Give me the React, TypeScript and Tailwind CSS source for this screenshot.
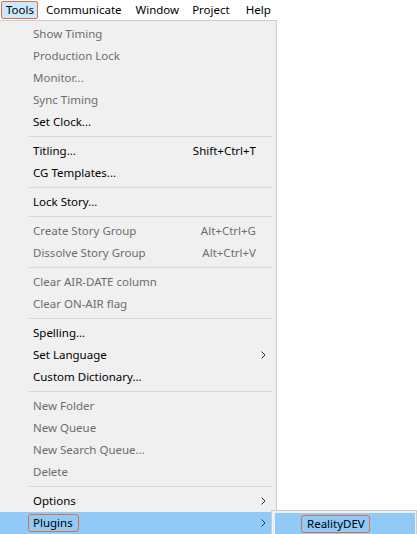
type Item = { label: string; shortcut?: string; disabled?: boolean; sub?: boolean } | 'sep';

const ITEMS: Item[] = [
  { label: 'Show Timing', disabled: true },
  { label: 'Production Lock', disabled: true },
  { label: 'Monitor...', disabled: true },
  { label: 'Sync Timing', disabled: true },
  { label: 'Set Clock...' },
  'sep',
  { label: 'Titling...', shortcut: 'Shift+Ctrl+T' },
  { label: 'CG Templates...' },
  'sep',
  { label: 'Lock Story...' },
  'sep',
  { label: 'Create Story Group', shortcut: 'Alt+Ctrl+G', disabled: true },
  { label: 'Dissolve Story Group', shortcut: 'Alt+Ctrl+V', disabled: true },
  'sep',
  { label: 'Clear AIR-DATE column', disabled: true },
  { label: 'Clear ON-AIR flag', disabled: true },
  'sep',
  { label: 'Spelling...' },
  { label: 'Set Language', sub: true },
  { label: 'Custom Dictionary...' },
  'sep',
  { label: 'New Folder', disabled: true },
  { label: 'New Queue', disabled: true },
  { label: 'New Search Queue...', disabled: true },
  { label: 'Delete', disabled: true },
  'sep',
  { label: 'Options', sub: true },
];

const Chevron = () => (
  <svg width="5" height="8" viewBox="0 0 5 8" className="absolute right-[10px]">
    <path d="M0.5 0.5 L4 4 L0.5 7.5" fill="none" stroke="#333" strokeWidth="1" />
  </svg>
);

export default function App() {
  return (
    <div className="relative w-[417px] h-[534px] bg-white overflow-hidden text-[11.5px] leading-none" style={{ fontFamily: '"Segoe UI", "Noto Sans", sans-serif' }}>
      {/* menu bar */}
      <div className="flex items-center h-[20px] text-black">
        <div className="ml-px h-[18px] w-[37px] pl-[4px] flex items-center bg-[#cce8ff] border border-[#e2703e] rounded-[2px]">Tools</div>
        <div className="ml-[8px]">Communicate</div>
        <div className="ml-[14px]">Window</div>
        <div className="ml-[13px]">Project</div>
        <div className="ml-[16px]">Help</div>
      </div>

      {/* dropdown */}
      <div className="w-[277px] bg-[#f0f0f0] border-r border-t border-[#cccccc] pt-[2px] flex flex-col">
        {ITEMS.map((it, i) =>
          it === 'sep' ? (
            <div key={i} className="h-[7px] flex items-center pl-[29px] pr-[4px]">
              <div className="h-px w-full bg-[#d7d7d7]" />
            </div>
          ) : (
            <div key={i} className={`relative h-[22px] flex items-center pl-[33px] ${it.disabled ? 'text-[#6d6d6d]' : 'text-black'}`}>
              <span>{it.label}</span>
              {it.shortcut && <span className="ml-auto mr-[20px]">{it.shortcut}</span>}
              {it.sub && <Chevron />}
            </div>
          )
        )}
        <div className="relative h-[22px] flex items-center pl-[28px] bg-[#91c9f7] text-black">
          <span className="h-[18px] w-[51px] pl-[4px] flex items-center border border-[#e2703e] rounded-[3px]">Plugins</span>
          <Chevron />
        </div>
      </div>

      {/* submenu */}
      <div className="absolute left-[271px] top-[510px] w-[146px] h-[24px] bg-[#f0f0f0] border-l border-t border-[#cccccc] pl-[3px] pt-[2px]">
        <div className="h-[22px] w-[140px] bg-[#91c9f7] flex items-center pl-[26px]">
          <span className="h-[18px] w-[69px] pl-[5px] flex items-center border border-[#e2703e] rounded-[3px] text-black">RealityDEV</span>
        </div>
        <div className="absolute right-0 top-0 h-full w-px bg-[#cccccc]" />
      </div>
    </div>
  );
}
